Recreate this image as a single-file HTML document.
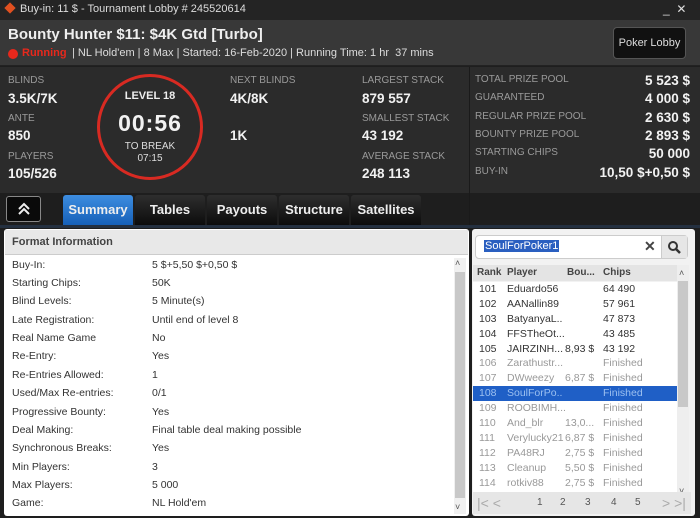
<!DOCTYPE html>
<html><head><style>
*{margin:0;padding:0;box-sizing:border-box}
body{width:700px;height:518px;background:#1e1e1e;font-family:"Liberation Sans",sans-serif;position:relative;overflow:hidden;color:#fff}
.a{position:absolute;white-space:nowrap}
.lbl{color:#9a9a9a;font-size:10px}
.val{font-weight:bold;font-size:13.5px;color:#f2f2f2}
.tab{position:absolute;top:195px;height:30px;background:linear-gradient(#2e2e2e,#0c0c0c);color:#eee;font-weight:bold;font-size:13px;text-align:center;line-height:30px;border-radius:3px 3px 0 0}
.fi{position:absolute;left:12px;font-size:10.5px;color:#333}
.fv{position:absolute;left:152px;font-size:10.5px;color:#333}
.r{position:absolute;left:473px;width:204px;height:15px;font-size:10.5px;color:#333;line-height:15px}
.r span{position:absolute}
.g{color:#999}
</style></head><body>
<div class="a" style="left:0;top:0;width:700px;height:20px;background:#242424"></div>
<div class="a" style="left:6px;top:4px;width:8px;height:8px;background:#e05020;transform:rotate(45deg)"></div>
<div class="a" style="left:20px;top:3px;font-size:11px;color:#ddd">Buy-in: 11 $ - Tournament Lobby # 245520614</div>
<div class="a" style="left:663px;top:2px;font-size:12px;color:#ddd">_ &nbsp;✕</div>
<div class="a" style="left:0;top:20px;width:700px;height:46px;background:#383838;border-bottom:1px solid #222"></div>
<div class="a" style="left:8px;top:26px;font-size:15px;font-weight:bold;color:#eee">Bounty Hunter $11: $4K Gtd [Turbo]</div>
<div class="a" style="left:8px;top:49px;width:10px;height:10px;border-radius:50%;background:#e8281c"></div>
<div class="a" style="left:22px;top:47px;font-size:11px;color:#e8281c;font-weight:bold">Running</div>
<div class="a" style="left:72px;top:47px;font-size:11px;color:#ddd">| NL Hold'em | 8 Max | Started: 16-Feb-2020 | Running Time: 1 hr &nbsp;37 mins</div>
<div class="a" style="left:613px;top:27px;width:73px;height:32px;background:#111;border:1px solid #555;border-radius:4px;font-size:11px;color:#ddd;text-align:center;line-height:30px">Poker Lobby</div>
<div class="a" style="left:0;top:67px;width:700px;height:126px;background:#2b2b2b"></div>
<div class="a" style="left:469px;top:67px;width:1px;height:158px;background:#1a1a1a"></div>
<div class="a lbl" style="left:8px;top:75px">BLINDS</div><div class="a val" style="left:8px;top:91px">3.5K/7K</div>
<div class="a lbl" style="left:8px;top:113px">ANTE</div><div class="a val" style="left:8px;top:128px">850</div>
<div class="a lbl" style="left:8px;top:151px">PLAYERS</div><div class="a val" style="left:8px;top:166px">105/526</div>
<div class="a" style="left:97px;top:74px;width:106px;height:106px;border:3px solid #d82a22;border-radius:50%"></div>
<div class="a" style="left:97px;top:90px;width:106px;text-align:center;font-size:11px;font-weight:bold;color:#eee">LEVEL 18</div>
<div class="a" style="left:97px;top:110px;width:106px;text-align:center;font-size:23px;font-weight:bold;color:#f2f2f2;letter-spacing:1px">00:56</div>
<div class="a" style="left:97px;top:141px;width:106px;text-align:center;font-size:10px;color:#ddd;line-height:12px">TO BREAK<br>07:15</div>
<div class="a lbl" style="left:230px;top:75px">NEXT BLINDS</div><div class="a val" style="left:230px;top:91px">4K/8K</div>
<div class="a val" style="left:230px;top:128px">1K</div>
<div class="a lbl" style="left:362px;top:75px">LARGEST STACK</div><div class="a val" style="left:362px;top:91px">879 557</div>
<div class="a lbl" style="left:362px;top:113px">SMALLEST STACK</div><div class="a val" style="left:362px;top:128px">43 192</div>
<div class="a lbl" style="left:362px;top:151px">AVERAGE STACK</div><div class="a val" style="left:362px;top:166px">248 113</div>
<div class="a lbl" style="left:475px;top:74px">TOTAL PRIZE POOL</div><div class="a val" style="right:10px;top:73px">5 523 $</div>
<div class="a lbl" style="left:475px;top:92px">GUARANTEED</div><div class="a val" style="right:10px;top:91px">4 000 $</div>
<div class="a lbl" style="left:475px;top:111px">REGULAR PRIZE POOL</div><div class="a val" style="right:10px;top:110px">2 630 $</div>
<div class="a lbl" style="left:475px;top:129px">BOUNTY PRIZE POOL</div><div class="a val" style="right:10px;top:128px">2 893 $</div>
<div class="a lbl" style="left:475px;top:147px">STARTING CHIPS</div><div class="a val" style="right:10px;top:146px">50 000</div>
<div class="a lbl" style="left:475px;top:166px">BUY-IN</div><div class="a val" style="right:10px;top:165px">10,50 $+0,50 $</div>
<div class="a" style="left:6px;top:196px;width:35px;height:26px;background:#0a0a0a;border:1px solid #888;border-radius:3px"></div>
<svg class="a" style="left:16px;top:201px" width="16" height="16"><path d="M3 8l5-5 5 5M3 13l5-5 5 5" stroke="#eee" stroke-width="2" fill="none"/></svg>
<div class="tab" style="left:63px;width:70px;background:linear-gradient(#3d8de0,#1660b8)">Summary</div>
<div class="tab" style="left:135px;width:70px">Tables</div>
<div class="tab" style="left:207px;width:70px">Payouts</div>
<div class="tab" style="left:279px;width:70px">Structure</div>
<div class="tab" style="left:351px;width:70px">Satellites</div>
<div class="a" style="left:0;top:225px;width:700px;height:3px;background:#243040"></div>
<div class="a" style="left:4px;top:229px;width:465px;height:287px;background:#fff;border-radius:3px"></div>
<div class="a" style="left:5px;top:230px;width:463px;height:25px;background:#e8e8e8;border-bottom:1px solid #ccc"></div>
<div class="a" style="left:12px;top:236px;font-size:11px;font-weight:bold;color:#444">Format Information</div>
<div class="a" style="left:454px;top:258px;width:12px;height:256px;background:#f0f0f0"></div>
<div class="a" style="left:455px;top:272px;width:10px;height:226px;background:#c8c8c8"></div>
<div class="a" style="left:455px;top:258px;font-size:9px;color:#555">˄</div>
<div class="a" style="left:455px;top:502px;font-size:9px;color:#555">˅</div>
<div class="fi" style="top:259px">Buy-In:</div><div class="fv" style="top:259px">5 $+5,50 $+0,50 $</div>
<div class="fi" style="top:277px">Starting Chips:</div><div class="fv" style="top:277px">50K</div>
<div class="fi" style="top:295px">Blind Levels:</div><div class="fv" style="top:295px">5 Minute(s)</div>
<div class="fi" style="top:314px">Late Registration:</div><div class="fv" style="top:314px">Until end of level 8</div>
<div class="fi" style="top:332px">Real Name Game</div><div class="fv" style="top:332px">No</div>
<div class="fi" style="top:350px">Re-Entry:</div><div class="fv" style="top:350px">Yes</div>
<div class="fi" style="top:369px">Re-Entries Allowed:</div><div class="fv" style="top:369px">1</div>
<div class="fi" style="top:387px">Used/Max Re-entries:</div><div class="fv" style="top:387px">0/1</div>
<div class="fi" style="top:406px">Progressive Bounty:</div><div class="fv" style="top:406px">Yes</div>
<div class="fi" style="top:424px">Deal Making:</div><div class="fv" style="top:424px">Final table deal making possible</div>
<div class="fi" style="top:442px">Synchronous Breaks:</div><div class="fv" style="top:442px">Yes</div>
<div class="fi" style="top:461px">Min Players:</div><div class="fv" style="top:461px">3</div>
<div class="fi" style="top:479px">Max Players:</div><div class="fv" style="top:479px">5 000</div>
<div class="fi" style="top:497px">Game:</div><div class="fv" style="top:497px">NL Hold'em</div>
<div class="a" style="left:472px;top:229px;width:223px;height:287px;background:#f2f2f2;border-radius:3px"></div>
<div class="a" style="left:475px;top:235px;width:213px;height:24px;background:#fff;border:1px solid #ccc;border-radius:4px"></div>
<div class="a" style="left:484px;top:240px;font-size:11px;color:#fff;background:#2a5fc0;padding:0 1px">SoulForPoker1</div>
<div class="a" style="left:644px;top:238px;font-size:14px;color:#444;font-weight:bold">✕</div>
<div class="a" style="left:661px;top:236px;width:26px;height:22px;background:#e6e6e6;border-left:1px solid #ccc"></div>
<svg class="a" style="left:667px;top:240px" width="14" height="14"><circle cx="6" cy="6" r="4" stroke="#333" stroke-width="2" fill="none"/><path d="M9 9l4 4" stroke="#333" stroke-width="2.5"/></svg>
<div class="a" style="left:473px;top:265px;width:204px;height:16px;background:#e4e4e4;font-size:10px;font-weight:bold;color:#444;line-height:16px"><span class="a" style="left:4px">Rank</span><span class="a" style="left:34px">Player</span><span class="a" style="left:94px">Bou...</span><span class="a" style="left:130px">Chips</span></div>
<div class="a" style="left:677px;top:265px;width:12px;height:235px;background:#eee"></div>
<div class="a" style="left:678px;top:281px;width:10px;height:126px;background:#c8c8c8"></div>
<div class="a" style="left:473px;top:282px;width:204px;height:218px;background:#fff"></div>
<div class="a" style="left:473px;top:386px;width:204px;height:15px;background:#1f5fc6"></div>
<div class="r" style="top:282px"><span style="left:6px">101</span><span style="left:34px">Eduardo56</span><span style="left:130px">64 490</span></div>
<div class="r" style="top:297px"><span style="left:6px">102</span><span style="left:34px">AANallin89</span><span style="left:130px">57 961</span></div>
<div class="r" style="top:312px"><span style="left:6px">103</span><span style="left:34px">BatyanyaL..</span><span style="left:130px">47 873</span></div>
<div class="r" style="top:327px"><span style="left:6px">104</span><span style="left:34px">FFSTheOt...</span><span style="left:130px">43 485</span></div>
<div class="r" style="top:342px"><span style="left:6px">105</span><span style="left:34px">JAIRZINH...</span><span style="left:92px">8,93 $</span><span style="left:130px">43 192</span></div>
<div class="r g" style="top:356px"><span style="left:6px">106</span><span style="left:34px">Zarathustr...</span><span style="left:130px">Finished</span></div>
<div class="r g" style="top:371px"><span style="left:6px">107</span><span style="left:34px">DWweezy</span><span style="left:92px">6,87 $</span><span style="left:130px">Finished</span></div>
<div class="r" style="top:386px;color:#9cc0f0"><span style="left:6px">108</span><span style="left:34px">SoulForPo..</span><span style="left:130px">Finished</span></div>
<div class="r g" style="top:401px"><span style="left:6px">109</span><span style="left:34px">ROOBIMH...</span><span style="left:130px">Finished</span></div>
<div class="r g" style="top:416px"><span style="left:6px">110</span><span style="left:34px">And_blr</span><span style="left:92px">13,0...</span><span style="left:130px">Finished</span></div>
<div class="r g" style="top:431px"><span style="left:6px">111</span><span style="left:34px">Verylucky21</span><span style="left:92px">6,87 $</span><span style="left:130px">Finished</span></div>
<div class="r g" style="top:446px"><span style="left:6px">112</span><span style="left:34px">PA48RJ</span><span style="left:92px">2,75 $</span><span style="left:130px">Finished</span></div>
<div class="r g" style="top:461px"><span style="left:6px">113</span><span style="left:34px">Cleanup</span><span style="left:92px">5,50 $</span><span style="left:130px">Finished</span></div>
<div class="r g" style="top:476px"><span style="left:6px">114</span><span style="left:34px">rotkiv88</span><span style="left:92px">2,75 $</span><span style="left:130px">Finished</span></div>
<div class="a" style="left:679px;top:268px;font-size:9px;color:#555">˄</div>
<div class="a" style="left:679px;top:486px;font-size:9px;color:#555">˅</div>
<div class="a" style="left:473px;top:492px;width:218px;height:22px;background:#e6e6e6;font-size:10px;color:#555;line-height:22px"><span class="a" style="left:4px;font-size:14px;color:#aaa">|&lt; &lt;</span><span class="a" style="left:64px">1</span><span class="a" style="left:87px">2</span><span class="a" style="left:112px">3</span><span class="a" style="left:138px">4</span><span class="a" style="left:162px">5</span><span class="a" style="left:189px;font-size:14px;color:#aaa">&gt; &gt;|</span></div>
</body></html>
